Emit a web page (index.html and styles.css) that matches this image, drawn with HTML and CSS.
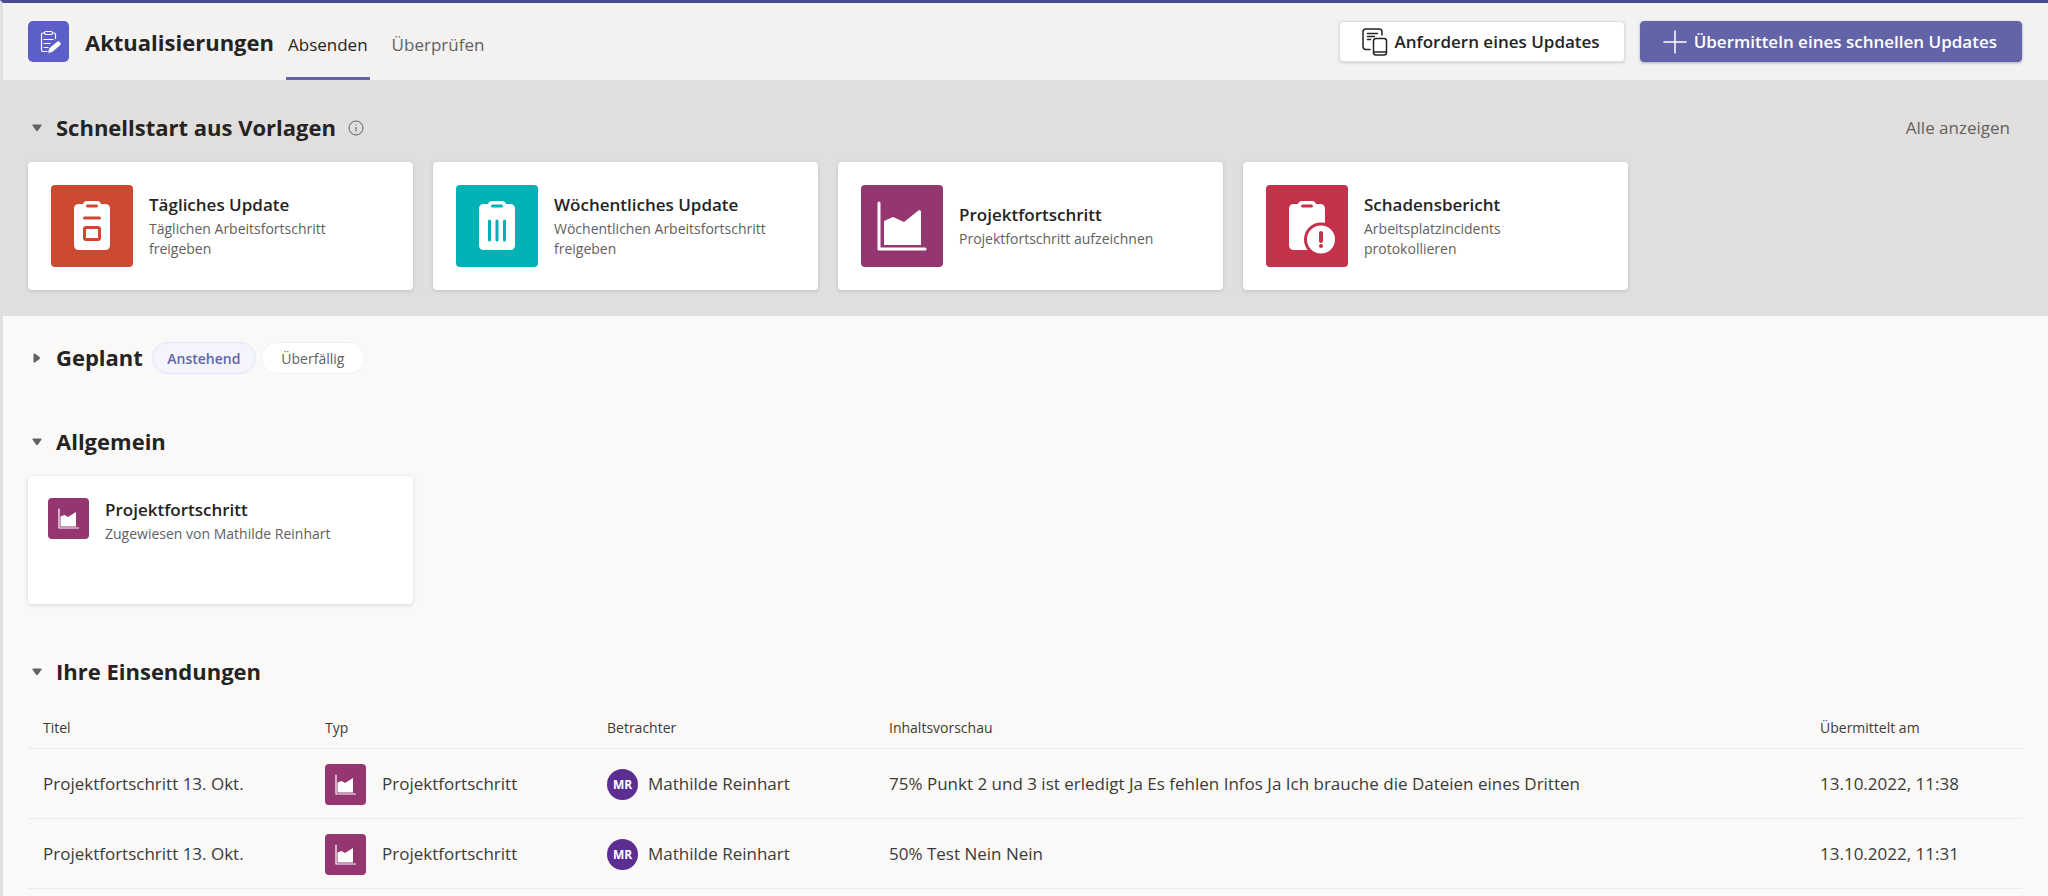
FILE: index.html
```html
<!DOCTYPE html>
<html lang="de">
<head>
    <meta charset="UTF-8">
    <meta name="viewport" content="width=device-width, initial-scale=1">
    <title>Aktualisierungen</title>
    <link rel="stylesheet" href="styles.css">
</head>

<body>

<!-- shared icons -->
<svg class="sprite" aria-hidden="true">
    <symbol id="icon-chart" viewBox="0 0 82 82">
        <path d="M18 18v46h46" fill="none" stroke="currentColor" stroke-width="3" stroke-linecap="round" stroke-linejoin="round"/>
        <path d="M23 36l9-4 11 5 15-12q2 0 2 2v33H23z" fill="currentColor"/>
    </symbol>
    <symbol id="icon-chart-small" viewBox="0 0 41 41">
        <path d="M11 11v19h19.500" fill="none" stroke="currentColor" stroke-width="1.200" stroke-linecap="round" stroke-linejoin="round"/>
        <path d="M12.500 18.500l4-1.500 3.500 2 8-5v14.500H12.500z" fill="currentColor"/>
    </symbol>
    <symbol id="icon-arrow" viewBox="0 0 10 8">
        <path d="M1 0.500h8q1 0.300 0.400 1.300L6 6.500q-1 1-2 0L0.600 1.800Q0 0.800 1 0.500z" fill="currentColor"/>
    </symbol>
</svg>

<header class="header">
    <div class="logo">
        <svg width="41" height="41" viewBox="0 0 41 41" fill="none" stroke="#fff" stroke-width="1.200" stroke-linecap="round" stroke-linejoin="round">
            <path d="M16.500 12H15q-1.500 0-1.500 1.500v15.500q0 1.500 1.500 1.500h4M24.500 12H26q1.500 0 1.500 1.500v4"/>
            <rect x="16.500" y="10.500" width="8" height="3" rx="1.500"/>
            <path d="M16 18.500h9M16 22.500h6M16 26.500h4"/>
            <path d="M20.500 31.500l1-4 7.500-6.500q2-1 3 .5t0 2.500l-7.500 6.500z" fill="#fff" stroke-width="0.500"/>
        </svg>
    </div>
    <h1>Aktualisierungen</h1>
    <nav class="tabs">
        <a class="tab active" href="#absenden">Absenden</a>
        <a class="tab" href="#pruefen">Überprüfen</a>
    </nav>
    <div class="actions">
        <button class="btn" type="button">
            <svg width="26" height="28" viewBox="0 0 26 28" fill="none" stroke="currentColor" stroke-width="1.500" stroke-linecap="round" stroke-linejoin="round">
                <path d="M8 21.500H4q-3 0-3-3V4q0-3 3-3h13q3 0 3 3v3"/>
                <path d="M5.500 5.500h10M5.500 8.500h7M5.500 11.500h3"/>
                <rect x="11.500" y="10.500" width="13" height="16.500" rx="2.500"/>
                <path d="M12 24h12"/>
            </svg>
            Anfordern eines Updates
        </button>
        <button class="btn primary" type="button">
            <svg width="24" height="24" viewBox="0 0 24 24" fill="none" stroke="currentColor" stroke-width="1.500" stroke-linecap="round">
                <path d="M12 1v22M1 12h22"/>
            </svg>
            Übermitteln eines schnellen Updates
        </button>
    </div>
</header>

<section class="templates" id="absenden">
    <div class="heading">
        <button class="toggle" type="button" aria-expanded="true" aria-label="Vorlagen einklappen"><svg><use href="#icon-arrow"/></svg></button>
        <h2>Schnellstart aus Vorlagen</h2>
        <svg class="info" width="16" height="16" viewBox="0 0 16 16" fill="none" stroke="currentColor">
            <circle cx="8" cy="8" r="7"/>
            <path d="M8 7v4.500M8 4.500v1"/>
        </svg>
        <a class="all" href="#alle">Alle anzeigen</a>
    </div>
    <div class="cards">
        <article class="card">
            <div class="tile orange">
                <svg viewBox="0 0 82 82">
                    <path d="M28 19h4q1-3 4-3h10q3 0 4 3h4q5 0 5 5v36q0 5-5 5H28q-5 0-5-5V24q0-5 5-5z" fill="currentColor"/>
                    <path d="M36.500 21h9M33.500 33h15" class="cut"/>
                    <rect x="33.500" y="42.500" width="15" height="12" rx="1.500" class="cut"/>
                </svg>
            </div>
            <div>
                <h3>Tägliches Update</h3>
                <p>Täglichen Arbeitsfortschritt freigeben</p>
            </div>
        </article>
        <article class="card">
            <div class="tile teal">
                <svg viewBox="0 0 82 82">
                    <path d="M28 19h4q1-3 4-3h10q3 0 4 3h4q5 0 5 5v36q0 5-5 5H28q-5 0-5-5V24q0-5 5-5z" fill="currentColor"/>
                    <path d="M36.500 21h9M33.500 36v19M41 36v19M48.500 36v19" class="cut"/>
                </svg>
            </div>
            <div>
                <h3>Wöchentliches Update</h3>
                <p>Wöchentlichen Arbeitsfortschritt freigeben</p>
            </div>
        </article>
        <article class="card">
            <div class="tile plum">
                <svg><use href="#icon-chart"/></svg>
            </div>
            <div>
                <h3>Projektfortschritt</h3>
                <p>Projektfortschritt aufzeichnen</p>
            </div>
        </article>
        <article class="card">
            <div class="tile red">
                <svg viewBox="0 0 82 82">
                    <path d="M28 19h4q1-3 4-3h10q3 0 4 3h4q5 0 5 5v36q0 5-5 5H28q-5 0-5-5V24q0-5 5-5z" fill="currentColor"/>
                    <path d="M36.500 21h9" class="cut"/>
                    <circle cx="55" cy="54.500" r="15.500" fill="currentColor" class="cut"/>
                    <path d="M55 48v8M55 61v.1" class="cut mark"/>
                </svg>
            </div>
            <div>
                <h3>Schadensbericht</h3>
                <p>Arbeitsplatzincidents protokollieren</p>
            </div>
        </article>
    </div>
</section>

<section class="planned">
    <div class="heading">
        <button class="toggle closed" type="button" aria-expanded="false" aria-label="Geplant ausklappen"><svg><use href="#icon-arrow"/></svg></button>
        <h2>Geplant</h2>
        <div class="pills">
            <button class="pill selected" type="button">Anstehend</button>
            <button class="pill" type="button">Überfällig</button>
        </div>
    </div>
</section>

<section class="general">
    <div class="heading">
        <button class="toggle" type="button" aria-expanded="true" aria-label="Allgemein einklappen"><svg><use href="#icon-arrow"/></svg></button>
        <h2>Allgemein</h2>
    </div>
    <div class="cards">
        <article class="card assigned">
            <div class="tile small plum">
                <svg><use href="#icon-chart-small"/></svg>
            </div>
            <div>
                <h3>Projektfortschritt</h3>
                <p>Zugewiesen von Mathilde Reinhart</p>
            </div>
        </article>
    </div>
</section>

<section class="submissions">
    <div class="heading">
        <button class="toggle" type="button" aria-expanded="true" aria-label="Einsendungen einklappen"><svg><use href="#icon-arrow"/></svg></button>
        <h2>Ihre Einsendungen</h2>
    </div>
    <table>
        <thead>
            <tr>
                <th class="col">Titel</th>
                <th class="col">Typ</th>
                <th class="col">Betrachter</th>
                <th>Inhaltsvorschau</th>
                <th class="col_date">Übermittelt am</th>
            </tr>
        </thead>
        <tbody>
            <tr>
                <td>Projektfortschritt 13. Okt.</td>
                <td>
                    <div class="cell type">
                        <div class="tile small plum"><svg><use href="#icon-chart-small"/></svg></div>
                        Projektfortschritt
                    </div>
                </td>
                <td>
                    <div class="cell"><span class="avatar">MR</span>Mathilde Reinhart</div>
                </td>
                <td>75% Punkt 2 und 3 ist erledigt Ja Es fehlen Infos Ja Ich brauche die Dateien eines Dritten</td>
                <td>13.10.2022, 11:38</td>
            </tr>
            <tr>
                <td>Projektfortschritt 13. Okt.</td>
                <td>
                    <div class="cell type">
                        <div class="tile small plum"><svg><use href="#icon-chart-small"/></svg></div>
                        Projektfortschritt
                    </div>
                </td>
                <td>
                    <div class="cell"><span class="avatar">MR</span>Mathilde Reinhart</div>
                </td>
                <td>50% Test Nein Nein</td>
                <td>13.10.2022, 11:31</td>
            </tr>
        </tbody>
    </table>
</section>

</body>

</html>
```
FILE: styles.css
```css
* {
    box-sizing: border-box;
}

body {
    min-height: 100vh;
    margin: 0;
    border-top: 3px solid #464a93;
    border-left: 3px solid #e1e0e0;
    background: #faf9f8;
    color: #252423;
    font-family: "Segoe UI", "Open Sans", "Noto Sans", sans-serif;
    font-size: 17px;
    line-height: 24px;
}

h1, h2, h3, p {
    margin: 0;
}

h1, h2 {
    font-size: 22px;
    line-height: 30px;
    font-weight: 700;
}

h3 {
    font-size: 17px;
    line-height: 24px;
    font-weight: 600;
}

p {
    padding-top: 2px;
    color: #616161;
    font-size: 14px;
    line-height: 20px;
}

button {
    font-family: inherit;
    cursor: pointer;
}

a {
    color: #616161;
    text-decoration: none;
}

.sprite {
    display: none;
}

/* header */
.header {
    display: flex;
    align-items: center;
    height: 77px;
    padding: 0 26px 0 25px;
    background: #f3f2f1;
}

.logo {
    width: 41px;
    height: 41px;
    margin-right: 16px;
    border-radius: 5px;
    background: #5b5fc7;
}

.logo svg {
    display: block;
}

.tabs {
    display: flex;
    align-self: stretch;
    gap: 20px;
    margin-left: 12px;
}

.tab {
    display: flex;
    align-items: center;
    padding: 9px 2px 0;
    border-bottom: 3px solid transparent;
}

.tab.active {
    border-color: #6264a7;
    color: #252423;
}

.actions {
    display: flex;
    gap: 15px;
    margin-left: auto;
}

.btn {
    display: flex;
    align-items: center;
    gap: 7px;
    height: 41px;
    padding: 0 24px 0 22px;
    border: 1px solid #e1dfdd;
    border-radius: 4px;
    background: #fff;
    box-shadow: 0 1px 3px rgba(0, 0, 0, 0.15);
    color: #252423;
    font-size: 17px;
    font-weight: 600;
}

.btn.primary {
    border-color: #6264a7;
    background: #6264a7;
    box-shadow: 0 1px 3px rgba(0, 0, 0, 0.3);
    color: #fff;
}

/* sections */
section {
    padding: 0 26px 0 25px;
}

.heading {
    display: flex;
    align-items: center;
    height: 32px;
}

.heading h2 {
    padding-bottom: 2px;
}

.toggle {
    width: 18px;
    height: 18px;
    margin-right: 10px;
    padding: 0;
    border: none;
    background: none;
    color: #616161;
}

.toggle svg {
    display: block;
    width: 10px;
    height: 8px;
    margin: 4px;
}

.toggle.closed svg {
    transform: rotate(-90deg);
}

.info {
    margin-left: 12px;
    color: #616161;
}

.all {
    margin-left: auto;
    padding-right: 12px;
}

.templates {
    padding-top: 32px;
    padding-bottom: 26px;
    background: #e1dfdd;
}

.planned {
    padding-top: 26px;
}

.general {
    padding-top: 52px;
}

.submissions {
    padding-top: 52px;
}

/* cards */
.cards {
    display: grid;
    grid-template-columns: repeat(auto-fill, 385px);
    gap: 20px;
    margin-top: 18px;
}

.card {
    display: flex;
    align-items: center;
    gap: 16px;
    height: 128px;
    padding: 0 38px 0 23px;
    border-radius: 4px;
    background: #fff;
    box-shadow: 0 1px 4px rgba(0, 0, 0, 0.15);
}

.card.assigned {
    align-items: flex-start;
    padding: 22px 20px;
}

.tile {
    flex: none;
    width: 82px;
    height: 82px;
    border-radius: 4px;
    color: #fff;
}

.tile svg {
    display: block;
    width: 100%;
    height: 100%;
}

.tile.small {
    width: 41px;
    height: 41px;
}

.cut {
    fill: none;
    stroke: #cc4a31;
    stroke-width: 3;
    stroke-linecap: round;
}

.orange {
    background: #cc4a31;
}

.teal {
    background: #00b2b6;
}

.teal .cut {
    stroke: #00b2b6;
}

.plum {
    background: #943670;
}

.red {
    background: #c4314b;
}

.red .cut {
    stroke: #c4314b;
}

.red circle {
    fill: #fff;
}

.red .mark {
    stroke-width: 4;
}

/* filter pills */
.pills {
    display: flex;
    gap: 5px;
    margin-left: 9px;
}

.pill {
    width: 104px;
    height: 32px;
    padding: 0;
    border: 1px solid #f3f2f1;
    border-radius: 16px;
    background: #fff;
    color: #616161;
    font-size: 14px;
}

.pill.selected {
    border-color: #e2e3f8;
    background: #f4f4fc;
    color: #6264a7;
    font-weight: 600;
}

/* table */
table {
    width: 100%;
    margin-top: 18px;
    border-collapse: collapse;
    table-layout: fixed;
    color: #3b3a39;
}

th, td {
    padding: 2px 15px 0;
    border-bottom: 1px solid #edebe9;
    text-align: left;
}

th {
    height: 42px;
    font-size: 14px;
    font-weight: 400;
}

td {
    height: 70px;
}

.col {
    width: 282px;
}

.col_date {
    width: 217px;
}

.cell {
    display: flex;
    align-items: center;
    gap: 10px;
}

.cell.type {
    gap: 16px;
}

.avatar {
    width: 31px;
    height: 31px;
    border-radius: 50%;
    background: #5c2e91;
    color: #fff;
    font-size: 12px;
    line-height: 31px;
    font-weight: 700;
    text-align: center;
}
```
